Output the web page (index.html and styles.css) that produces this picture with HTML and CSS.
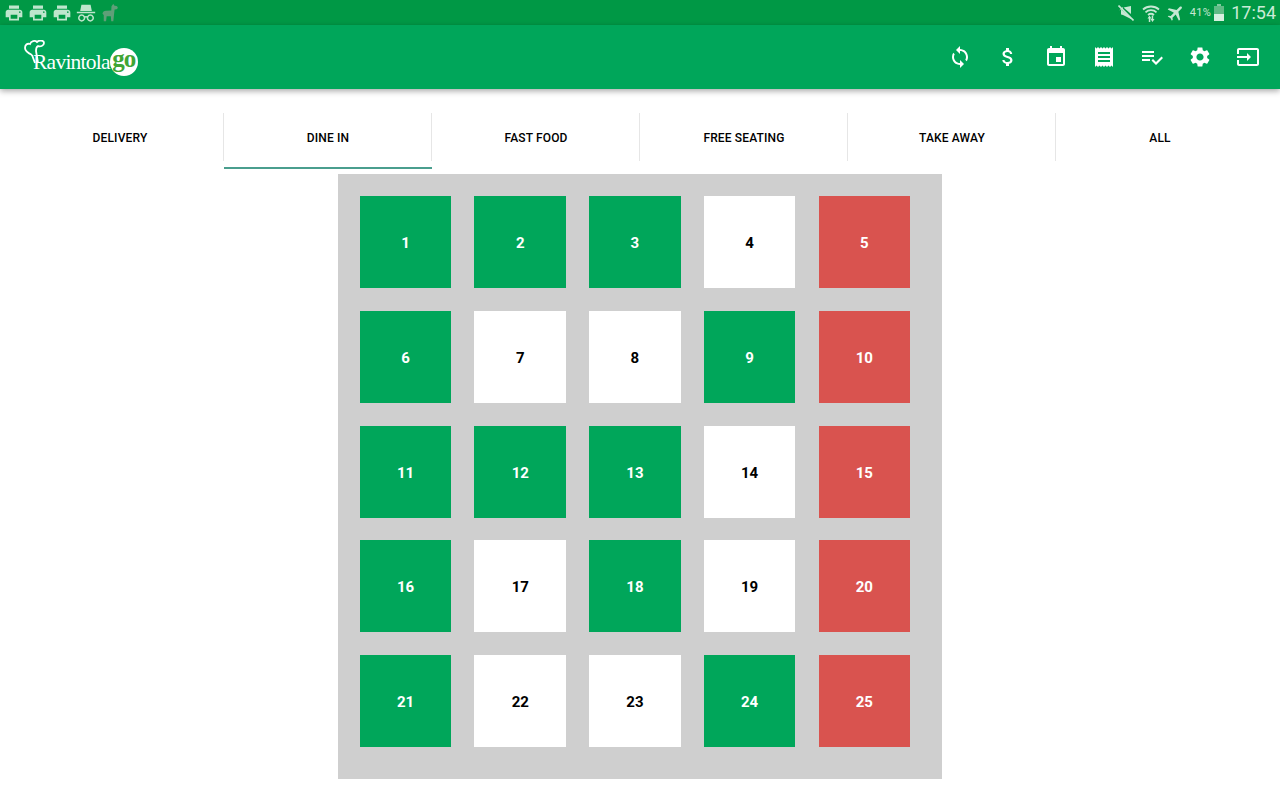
FILE: index.html
```html
<!DOCTYPE html>
<html lang="en">
<head>
<meta charset="utf-8">
<title>Ravintola go</title>
<link rel="stylesheet" href="styles.css">
</head>
<body>
<div class="status">
  <div class="status-left">
    <svg class="si faded" viewBox="0 0 24 24"><path d="M19 8H5c-1.660 0-3 1.340-3 3v6h4v4h12v-4h4v-6c0-1.660-1.340-3-3-3zm-3 11H8v-5h8v5zm3-7c-.55 0-1-.45-1-1s.45-1 1-1 1 .45 1 1-.45 1-1 1zm-1-9H6v4h12V3z"/></svg>
    <svg class="si faded" viewBox="0 0 24 24"><path d="M19 8H5c-1.660 0-3 1.340-3 3v6h4v4h12v-4h4v-6c0-1.660-1.340-3-3-3zm-3 11H8v-5h8v5zm3-7c-.55 0-1-.45-1-1s.45-1 1-1 1 .45 1 1-.45 1-1 1zm-1-9H6v4h12V3z"/></svg>
    <svg class="si faded" viewBox="0 0 24 24"><path d="M19 8H5c-1.660 0-3 1.340-3 3v6h4v4h12v-4h4v-6c0-1.660-1.340-3-3-3zm-3 11H8v-5h8v5zm3-7c-.55 0-1-.45-1-1s.45-1 1-1 1 .45 1 1-.45 1-1 1zm-1-9H6v4h12V3z"/></svg>
    <svg class="si faded" viewBox="0 0 24 24"><path d="M6.500 2h11l1.500 7.500H5zM1 10.500h22v1.800H1z"/><path class="ring" d="M6.800 14.500a3.500 3.500 0 1 0 .01 0zM17.200 14.500a3.500 3.500 0 1 0 .01 0zM10 17.200q2-1.200 4 0"/></svg>
    <svg class="si llama" viewBox="0 0 24 24"><path d="M16 1l1 2 3.500 1 1 2-1.500 1.500-2.500.2-.7 6.300L16 22h-2.500l-.5-6H8l-.7 6H4.500v-7.500L3 13c.3-2.500 2-4 5-3.700l5.500-.3.300-5z"/></svg>
  </div>
  <div class="status-right">
    <svg class="si mute-icon" viewBox="0 0 16 16"><path d="M1 5.500L5 2v1.500zM13 1v8L5.500 2.500zM13 14v-1.500L3 4.500v5l2 .5z"/><path class="mute" d="M.5.500l15 15"/></svg>
    <svg class="si wifi" viewBox="0 0 18 18"><path class="wave" d="M1 5.500c4.500-4 11.500-4 16 0M3.500 8.300c3-2.800 8-2.800 11 0M6 11c1.800-1.500 4.200-1.500 6 0"/><path d="M7.500 11.500l2 3H8.300V18H6.800v-3.500H5.500zM10.500 18l-2-3h1.200v-3.500h1.500V15h1.300z"/></svg>
    <svg class="si plane" viewBox="0 0 24 24"><path d="M21 16v-2l-8-5V3.500c0-.83-.67-1.500-1.500-1.500S10 2.670 10 3.500V9l-8 5v2l8-2.500V19l-2 1.500V22l3.500-1 3.500 1v-1.500L13 19v-5.500l8 2.500z"/></svg>
    <span class="pct">41%</span>
    <span class="battery"><span class="battery-cap"></span><span class="battery-body"><span class="battery-fill"></span></span></span>
    <span class="time">17:54</span>
  </div>
</div>
<header class="appbar">
  <div class="logo">
    <svg class="hat" viewBox="0 0 24 28"><path d="M8 15C4 13 1 11 1 8S3 3 6 4C7 1 11 0 13 2c2-2 7-2 7 1s-4 4-6 3c-2 1-2 3-2 5l2 12M8 15l3 8"/></svg>
    <span class="logo-word">Ravintola</span>
    <span class="logo-go">go</span>
  </div>
  <nav class="actions">
    <span class="action"><svg viewBox="0 0 24 24"><path d="M12 4V1L8 5l4 4V6c3.310 0 6 2.690 6 6 0 1.010-.25 1.970-.7 2.800l1.460 1.460C19.540 15.030 20 13.570 20 12c0-4.420-3.580-8-8-8zm0 14c-3.310 0-6-2.690-6-6 0-1.010.25-1.970.7-2.800L5.240 7.740C4.460 8.970 4 10.430 4 12c0 4.420 3.580 8 8 8v3l4-4-4-4v3z"/></svg></span>
    <span class="action"><svg viewBox="0 0 24 24"><path d="M11.800 10.900c-2.270-.59-3-1.200-3-2.150 0-1.090 1.010-1.850 2.700-1.850 1.780 0 2.440.85 2.500 2.100h2.210c-.07-1.720-1.120-3.300-3.210-3.810V3h-3v2.160c-1.940.42-3.500 1.680-3.500 3.610 0 2.310 1.910 3.460 4.700 4.130 2.500.6 3 1.480 3 2.410 0 .69-.49 1.790-2.700 1.790-2.060 0-2.870-.92-2.980-2.100h-2.200c.12 2.190 1.760 3.420 3.680 3.830V21h3v-2.150c1.950-.37 3.500-1.500 3.500-3.550 0-2.840-2.430-3.810-4.700-4.400z"/></svg></span>
    <span class="action"><svg viewBox="0 0 24 24"><path d="M17 12h-5v5h5v-5zM16 1v2H8V1H6v2H5c-1.110 0-1.990.9-1.990 2L3 19c0 1.100.89 2 2 2h14c1.100 0 2-.9 2-2V5c0-1.100-.9-2-2-2h-1V1h-2zm3 18H5V8h14v11z"/></svg></span>
    <span class="action"><svg viewBox="0 0 24 24"><path d="M18 17H6v-2h12v2zm0-4H6v-2h12v2zm0-4H6V7h12v2zM3 22l1.500-1.500L6 22l1.500-1.500L9 22l1.500-1.500L12 22l1.500-1.500L15 22l1.500-1.500L18 22l1.500-1.500L21 22V2l-1.500 1.500L18 2l-1.500 1.500L15 2l-1.500 1.500L12 2l-1.500 1.500L9 2 7.500 3.500 6 2 4.500 3.500 3 2v20z"/></svg></span>
    <span class="action"><svg viewBox="0 0 24 24"><path d="M14 10H2v2h12v-2zm0-4H2v2h12V6zM2 16h8v-2H2v2zm19.500-4.500L23 13l-6.990 7-4.510-4.500L13 14l3.010 3 5.490-5.500z"/></svg></span>
    <span class="action"><svg viewBox="0 0 24 24"><path d="M19.140 12.940c.04-.3.06-.61.06-.94 0-.32-.02-.64-.07-.94l2.030-1.580c.18-.14.23-.41.12-.61l-1.920-3.320c-.12-.22-.37-.29-.59-.22l-2.390.96c-.5-.38-1.030-.7-1.620-.94l-.36-2.540c-.04-.24-.24-.41-.48-.41h-3.840c-.24 0-.43.17-.47.41l-.36 2.540c-.59.24-1.130.57-1.620.94l-2.390-.96c-.22-.08-.47 0-.59.22L2.740 8.870c-.12.21-.08.47.12.61l2.030 1.580c-.05.3-.09.63-.09.94s.02.64.07.94l-2.030 1.580c-.18.14-.23.41-.12.61l1.920 3.320c.12.22.37.29.59.22l2.390-.96c.5.38 1.030.7 1.620.94l.36 2.540c.05.24.24.41.48.41h3.840c.24 0 .44-.17.47-.41l.36-2.540c.59-.24 1.130-.56 1.620-.94l2.390.96c.22.08.47 0 .59-.22l1.920-3.320c.12-.22.07-.47-.12-.61l-2.010-1.580zM12 15.600c-1.980 0-3.600-1.620-3.600-3.600s1.620-3.600 3.600-3.600 3.600 1.620 3.600 3.600-1.620 3.600-3.600 3.600z"/></svg></span>
    <span class="action"><svg viewBox="0 0 24 24"><path d="M21 3.010H3c-1.100 0-2 .9-2 2V9h2V4.990h18v14.030H3V15H1v4.010c0 1.100.9 1.980 2 1.980h18c1.100 0 2-.88 2-1.980v-14c0-1.110-.9-2-2-2zM11 16l4-4-4-4v3H1v2h10v3z"/></svg></span>
  </nav>
</header>
<div class="tabs">
  <div class="tab">DELIVERY</div>
  <div class="tab active">DINE IN</div>
  <div class="tab">FAST FOOD</div>
  <div class="tab">FREE SEATING</div>
  <div class="tab">TAKE AWAY</div>
  <div class="tab last">ALL</div>
</div>
<main class="tables">
  <div class="cell green">1</div><div class="cell green">2</div><div class="cell green">3</div><div class="cell free">4</div><div class="cell red">5</div>
  <div class="cell green">6</div><div class="cell free">7</div><div class="cell free">8</div><div class="cell green">9</div><div class="cell red">10</div>
  <div class="cell green">11</div><div class="cell green">12</div><div class="cell green">13</div><div class="cell free">14</div><div class="cell red">15</div>
  <div class="cell green">16</div><div class="cell free">17</div><div class="cell green">18</div><div class="cell free">19</div><div class="cell red">20</div>
  <div class="cell green">21</div><div class="cell free">22</div><div class="cell free">23</div><div class="cell green">24</div><div class="cell red">25</div>
</main>
</body>
</html>
```
FILE: styles.css
```css
* { box-sizing: border-box; }
html, body { margin: 0; height: 800px; overflow: hidden; background: #fff; }
body { font-family: Roboto, "Liberation Sans", sans-serif; color: #000; }

.status {
  height: 25px;
  background: #009845;
  display: flex;
  justify-content: space-between;
  align-items: center;
  padding: 0 4px;
  color: #c6e8d3;
}
.status-left, .status-right { display: flex; align-items: center; }
.status-left { gap: 4px; }
.si { width: 20px; height: 20px; fill: currentColor; display: block; }
.faded { color: #bfe6cd; }
.ring { fill: none; stroke: currentColor; stroke-width: 1.8; }
.llama { color: #5f9f78; }
.mute-icon { width: 16px; height: 16px; margin-right: 8px; }
.mute { stroke: currentColor; stroke-width: 1.6; fill: none; }
.wifi { width: 18px; height: 18px; margin-right: 6px; }
.wave { fill: none; stroke: currentColor; stroke-width: 1.8; }
.plane { width: 20px; height: 20px; margin-right: 4px; transform: rotate(45deg); }
.pct { font-size: 11px; margin-right: 3px; letter-spacing: .3px; }
.battery { width: 10px; display: flex; flex-direction: column; align-items: center; margin-right: 7px; }
.battery-cap { width: 4px; height: 2px; background: #7fc99d; }
.battery-body { width: 10px; height: 15px; background: #5fbb85; display: flex; align-items: flex-end; }
.battery-fill { width: 100%; height: 7px; background: #d6f0e0; }
.time { font-size: 18px; color: #c9ebd6; }

.appbar {
  height: 64px;
  background: #00a65a;
  display: flex;
  justify-content: space-between;
  align-items: center;
  padding: 0 8px 0 24px;
  box-shadow: 0 2px 6px rgba(0, 0, 0, .35);
  position: relative;
}
.logo { display: flex; align-items: center; height: 64px; color: #fff; position: relative; padding: 20px 0 0 9px; }
.hat { width: 24px; height: 28px; position: absolute; left: 0; top: 15px; fill: none; stroke: #fff; stroke-width: 1.8; }
.logo-word { font-family: "Liberation Serif", serif; font-size: 21.5px; letter-spacing: -.75px; line-height: 22px; margin-top: -11px; }
.logo-go {
  width: 28px; height: 28px; border-radius: 50%;
  background: #fff; color: #3fa535;
  font-family: "Liberation Serif", serif; font-size: 25px; font-weight: 700; line-height: 21px;
  text-align: center; letter-spacing: -1px;
  margin: -10px 0 0;
}
.actions { display: flex; }
.action { width: 48px; height: 48px; display: flex; align-items: center; justify-content: center; }
.action svg { width: 24px; height: 24px; fill: #fff; display: block; }

.tabs { display: flex; padding: 24px 16px 0; height: 80px; }
.tab {
  flex: 1;
  height: 56px;
  position: relative;
  display: flex;
  align-items: flex-start;
  justify-content: center;
  padding-top: 1px;
  font-size: 12px;
  font-weight: 500;
  letter-spacing: .15px;
  line-height: 48px;
}
.tab::after {
  content: "";
  position: absolute;
  right: 0;
  top: 0;
  width: 1px;
  height: 48px;
  background: #e6e6e6;
}
.tab.last::after { display: none; }
.tab.active { border-bottom: 2px solid #4a9e8e; }

.tables {
  width: 604.5px;
  height: 605px;
  margin: 5px auto 0;
  background: #cfcfcf;
  padding: 22px 31px 32px 22px;
  display: grid;
  grid-template-columns: repeat(5, 91.6px);
  grid-auto-rows: 92px;
  column-gap: 23.1px;
  row-gap: 22.75px;
}
.cell {
  display: flex;
  align-items: center;
  justify-content: center;
  padding-top: 2px;
  font-size: 15px;
  font-weight: 700;
}
.green { background: #00a65a; color: #fff; }
.free { background: #fff; color: #000; }
.red { background: #d9534f; color: #fff; }
```
